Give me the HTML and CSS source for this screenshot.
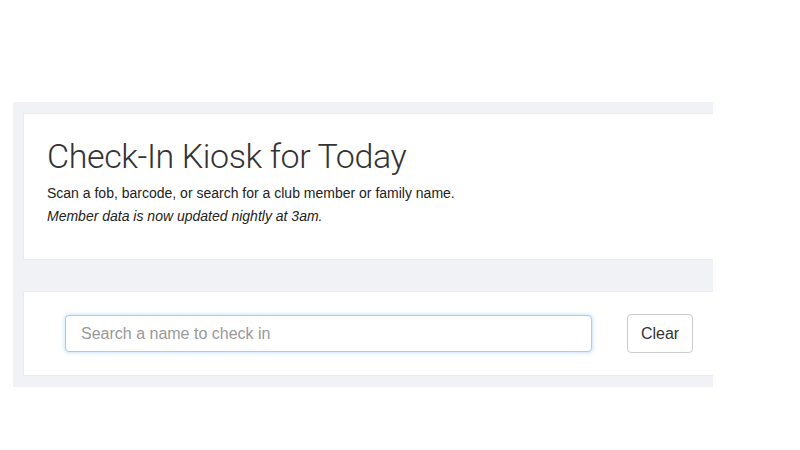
FILE: index.html
```html
<!DOCTYPE html>
<html lang="en">
<head>
    <meta charset="UTF-8">
    <meta name="viewport" content="width=device-width, initial-scale=1.0">
    <title>Check-In Kiosk</title>
    <link rel="stylesheet" href="styles.css">
</head>
<body>
    <div class="kiosk">
        <div class="panel intro">
            <h1 class="title">Check-In Kiosk for Today</h1>
            <p class="lead">Scan a fob, barcode, or search for a club member or family name.</p>
            <p class="note">Member data is now updated nightly at 3am.</p>
        </div>
        <div class="panel search">
            <input type="text" class="search-input" placeholder="Search a name to check in" autofocus>
            <button class="clear-btn" onclick="clearSearch()">Clear</button>
        </div>
    </div>

    <script>
        function clearSearch() {
            var input = document.querySelector(".search-input");
            input.value = "";
            input.focus();
        }
    </script>
</body>
</html>
```

FILE: styles.css
```css
* {
    margin: 0;
    padding: 0;
    box-sizing: border-box;
}
body {
    font-family: "Liberation Sans", Arial, sans-serif;
    background-color: #fff;
    color: #333;
}
.kiosk {
    width: 700px;
    margin: 102px 0 0 13px;
    padding: 11px 0 11px 10px;
    background-color: #f0f2f5;
    display: flex;
    flex-direction: column;
    gap: 31px;
}
.panel {
    background: #fff;
    border: 1px solid #e9ebee;
    border-right: none;
}
.intro {
    height: 147px;
    padding: 22px 24px 0 23px;
}
.title {
    font-family: Roboto, "Liberation Sans", sans-serif;
    font-size: 34px;
    font-weight: 300;
    letter-spacing: -0.4px;
    color: #333;
    line-height: 1.2;
    margin-bottom: 6px;
}
.lead {
    font-size: 14px;
    line-height: 20px;
    color: #222;
    margin-bottom: 3px;
}
.note {
    font-size: 14px;
    line-height: 20px;
    font-style: italic;
    color: #222;
}
.search {
    height: 85px;
    display: flex;
    align-items: center;
    padding: 0 20px 0 41px;
    gap: 35px;
}
.search-input {
    flex: 1;
    height: 37px;
    border: 1px solid #a8cdee;
    border-radius: 4px;
    box-shadow: 0 0 4px rgba(102, 175, 233, 0.5);
    padding: 0 15px;
    font-size: 16px;
    font-family: "Liberation Sans", Arial, sans-serif;
    color: #555;
    outline: none;
}
.search-input::placeholder {
    color: #999;
}
.clear-btn {
    width: 66px;
    height: 39px;
    background: #fff;
    border: 1px solid #ccc;
    border-radius: 4px;
    font-size: 16px;
    font-family: "Liberation Sans", Arial, sans-serif;
    color: #333;
    cursor: pointer;
}
.clear-btn:hover {
    background-color: #e6e6e6;
}
```
